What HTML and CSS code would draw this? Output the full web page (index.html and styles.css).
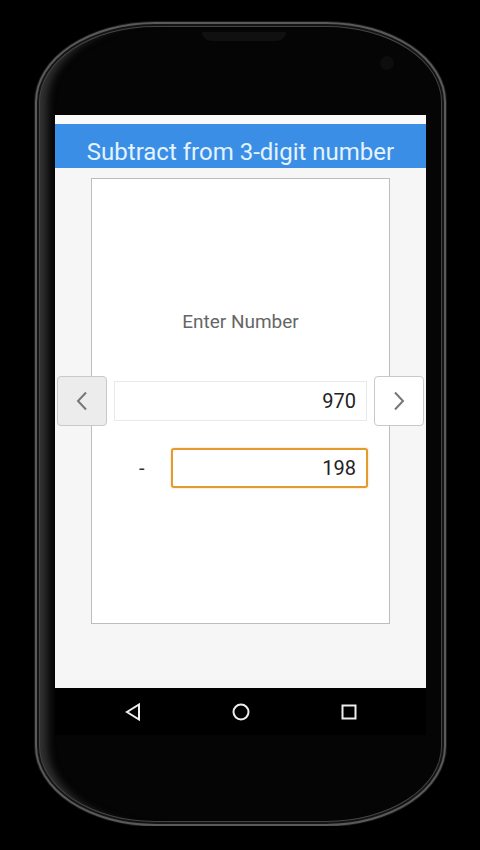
FILE: index.html
```html
<!DOCTYPE html>
<html lang="en">
<head>
  <meta charset="UTF-8">
  <title>Subtract from 3-digit number</title>
  <link rel="stylesheet" href="styles.css">
</head>
<body>

  <div class="phone">
    <div class="speaker"></div>
    <div class="camera"></div>

    <div class="screen">
      <div class="app">
        <div class="topline"></div>
        <h1 class="titlebar">Subtract from 3-digit number</h1>

        <div class="content">
          <div class="card">
            <p class="prompt">Enter Number</p>

            <div class="row">
              <button class="nav-btn prev">
                <svg width="12" height="20" viewBox="0 0 12 20"><polyline points="10,1.5 2,10 10,18.5" /></svg>
              </button>
              <input class="num plain" type="text" value="970">
              <button class="nav-btn next">
                <svg width="12" height="20" viewBox="0 0 12 20"><polyline points="2,1.5 10,10 2,18.5" /></svg>
              </button>
            </div>

            <div class="row2">
              <span class="minus">-</span>
              <input class="num active" type="text" value="198">
            </div>
          </div>
        </div>
      </div>

      <div class="navbar">
        <svg width="20" height="20" viewBox="0 0 20 20"><polygon points="16,2.5 16,17.5 4,10" /></svg>
        <svg width="20" height="20" viewBox="0 0 20 20"><circle cx="10" cy="10" r="7.5" /></svg>
        <svg width="20" height="20" viewBox="0 0 20 20"><rect x="3.5" y="3.5" width="13" height="13" /></svg>
      </div>
    </div>
  </div>

</body>
</html>
```

FILE: styles.css
```css
body {
  margin: 0;
  background-color: #000;
  font-family: Roboto, "Noto Sans", Arial, sans-serif;
}
.phone {
  position: relative;
  box-sizing: border-box;
  width: 411px;
  height: 804px;
  margin: 22px 0 0 35px;
  padding: 91px 18px 0 18px;
  background-color: #050505;
  border: 2px solid #5a5a5a;
  border-radius: 120px / 80px;
  box-shadow: 0 0 0 1px #1a1a1a, inset 0 0 0 2px #141414, inset 0 0 0 3px #444, inset 16px 0 8px -6px #333;
}
.speaker {
  position: absolute;
  top: 8px;
  left: 165px;
  width: 84px;
  height: 9px;
  background-color: #101010;
  border-radius: 0 0 14px 14px;
}
.camera {
  position: absolute;
  top: 32px;
  right: 50px;
  width: 14px;
  height: 14px;
  border-radius: 50%;
  background-color: #0d0d0d;
}
.screen {
  width: 371px;
}
.app {
  height: 573px;
  background-color: #f6f6f6;
  display: flex;
  flex-direction: column;
}
.topline {
  height: 9px;
  background-color: #fafafa;
}
.titlebar {
  margin: 0;
  height: 44px;
  box-sizing: border-box;
  padding-top: 14px;
  background-color: #3a8ee6;
  color: #e3f3ff;
  font-size: 24px;
  font-weight: normal;
  line-height: 28px;
  text-align: center;
  white-space: nowrap;
}
.content {
  flex: 1;
  padding: 10px 36px 0;
}
.card {
  box-sizing: border-box;
  height: 446px;
  background-color: #fff;
  border: 1px solid #bdbdbd;
  padding-top: 131px;
}
.prompt {
  margin: 0;
  text-align: center;
  color: #666;
  font-size: 19px;
  line-height: 24px;
}
.row {
  display: flex;
  align-items: center;
  gap: 7px;
  height: 50px;
  margin: 42px -35px 0;
}
.nav-btn {
  box-sizing: border-box;
  width: 50px;
  height: 50px;
  padding: 0;
  border: 1px solid #c9c9c9;
  border-radius: 4px;
  display: flex;
  align-items: center;
  justify-content: center;
}
.nav-btn svg polyline {
  fill: none;
  stroke: #777;
  stroke-width: 2;
}
.prev {
  background-color: #ececec;
}
.next {
  background-color: #fff;
}
.num {
  box-sizing: border-box;
  height: 40px;
  padding: 0 10px;
  font-family: Roboto, "Noto Sans", Arial, sans-serif;
  font-size: 20px;
  color: #222;
  text-align: right;
  background-color: #fff;
  outline: none;
}
.plain {
  flex: 1;
  min-width: 0;
  border: 1px solid #e9e9e9;
}
.row2 {
  display: flex;
  align-items: center;
  height: 40px;
  margin-top: 22px;
  padding-right: 21px;
}
.minus {
  width: 79px;
  box-sizing: border-box;
  padding-left: 47px;
  font-size: 20px;
  color: #333;
}
.active {
  width: 197px;
  border: 2px solid #e49a2d;
  border-radius: 3px;
  box-shadow: 0 0 2px rgba(228, 154, 45, 0.5);
}
.navbar {
  height: 47px;
  background-color: #000;
  display: flex;
  align-items: center;
  justify-content: center;
  gap: 88px;
}
.navbar svg * {
  fill: none;
  stroke: #eee;
  stroke-width: 2;
}
```
